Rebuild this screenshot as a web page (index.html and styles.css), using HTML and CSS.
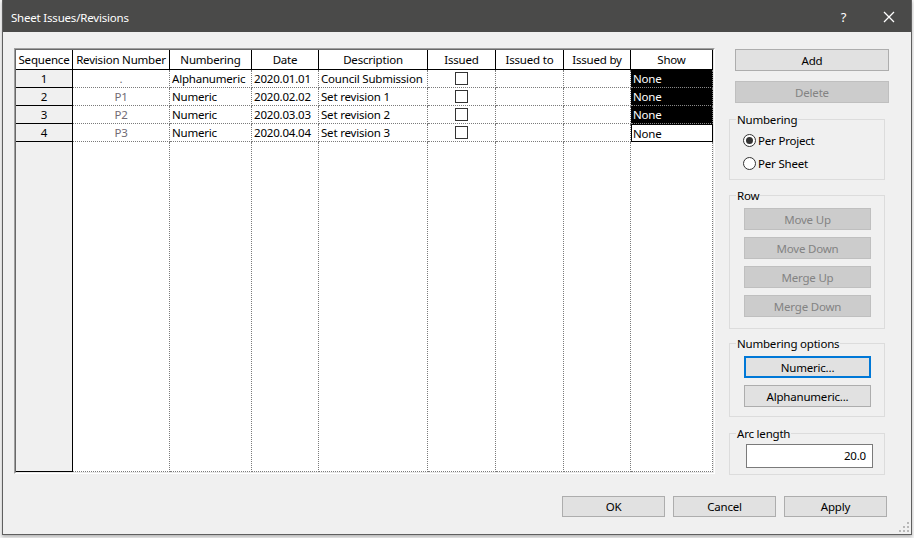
FILE: index.html
```html
<!DOCTYPE html>
<html>
<head>
<meta charset="utf-8">
<title>Sheet Issues/Revisions</title>
<link rel="stylesheet" href="styles.css">
</head>
<body>
<div class="window">
  <div class="titlebar">
    <span class="title">Sheet Issues/Revisions</span>
    <span class="help">?</span>
    <span class="close"><svg width="12" height="12" viewBox="0 0 12 12"><path d="M1 1 L11 11 M11 1 L1 11" stroke="#fff" stroke-width="1.3"/></svg></span>
  </div>
  <div class="client">
    <div class="main">
      <div class="frame">
        <div class="grid">
          <div class="h">Sequence</div>
          <div class="h">Revision Number</div>
          <div class="h">Numbering</div>
          <div class="h">Date</div>
          <div class="h">Description</div>
          <div class="h">Issued</div>
          <div class="h">Issued to</div>
          <div class="h">Issued by</div>
          <div class="h">Show</div>

          <div class="rh">1</div>
          <div class="c rev">.</div>
          <div class="c">Alphanumeric</div>
          <div class="c">2020.01.01</div>
          <div class="c">Council Submission</div>
          <div class="c chk"><span class="box"></span></div>
          <div class="c"></div>
          <div class="c"></div>
          <div class="c show sel">None</div>

          <div class="rh">2</div>
          <div class="c rev">P1</div>
          <div class="c">Numeric</div>
          <div class="c">2020.02.02</div>
          <div class="c">Set revision 1</div>
          <div class="c chk"><span class="box"></span></div>
          <div class="c"></div>
          <div class="c"></div>
          <div class="c show sel">None</div>

          <div class="rh">3</div>
          <div class="c rev">P2</div>
          <div class="c">Numeric</div>
          <div class="c">2020.03.03</div>
          <div class="c">Set revision 2</div>
          <div class="c chk"><span class="box"></span></div>
          <div class="c"></div>
          <div class="c"></div>
          <div class="c show sel">None</div>

          <div class="rh">4</div>
          <div class="c rev">P3</div>
          <div class="c">Numeric</div>
          <div class="c">2020.04.04</div>
          <div class="c">Set revision 3</div>
          <div class="c chk"><span class="box"></span></div>
          <div class="c"></div>
          <div class="c"></div>
          <div class="c show focus">None</div>

          <div class="rh"></div>
          <div class="c"></div>
          <div class="c"></div>
          <div class="c"></div>
          <div class="c"></div>
          <div class="c"></div>
          <div class="c"></div>
          <div class="c"></div>
          <div class="c"></div>
        </div>
      </div>
      <div class="side">
        <button class="btn top">Add</button>
        <button class="btn top off del">Delete</button>
        <fieldset class="group g-num">
          <legend>Numbering</legend>
          <label class="radio first"><span class="circle on"></span>Per Project</label>
          <label class="radio second"><span class="circle"></span>Per Sheet</label>
        </fieldset>
        <fieldset class="group g-row">
          <legend>Row</legend>
          <button class="btn inner off">Move Up</button>
          <button class="btn inner off">Move Down</button>
          <button class="btn inner off">Merge Up</button>
          <button class="btn inner off">Merge Down</button>
        </fieldset>
        <fieldset class="group g-opt">
          <legend>Numbering options</legend>
          <button class="btn inner focus">Numeric...</button>
          <button class="btn inner">Alphanumeric...</button>
        </fieldset>
        <fieldset class="group g-arc">
          <legend>Arc length</legend>
          <div class="input">20.0</div>
        </fieldset>
      </div>
    </div>
    <div class="footer">
      <button class="btn foot">OK</button>
      <button class="btn foot">Cancel</button>
      <button class="btn foot">Apply</button>
    </div>
    <svg class="grip" width="10" height="10" viewBox="0 0 10 10">
      <rect x="8" y="0" width="2" height="2" fill="#b8b8b8"/>
      <rect x="4" y="4" width="2" height="2" fill="#b8b8b8"/>
      <rect x="8" y="4" width="2" height="2" fill="#b8b8b8"/>
      <rect x="0" y="8" width="2" height="2" fill="#b8b8b8"/>
      <rect x="4" y="8" width="2" height="2" fill="#b8b8b8"/>
      <rect x="8" y="8" width="2" height="2" fill="#b8b8b8"/>
    </svg>
  </div>
</div>
</body>
</html>
```

FILE: styles.css
```css
* { box-sizing: border-box; }
html, body { margin: 0; padding: 0; }
body {
  width: 914px;
  height: 538px;
  overflow: hidden;
  background: #f4f4f4;
  font-family: "Noto Sans", "DejaVu Sans", sans-serif;
  font-size: 11.5px;
  letter-spacing: -0.2px;
  color: #000;
}
.window {
  margin-left: 2px;
  width: 910px;
  height: 535px;
  border: 1px solid #5f5f5f;
  border-top: none;
  background: #f0f0f0;
  box-shadow: 0 2px 3px rgba(0, 0, 0, 0.25);
  display: flex;
  flex-direction: column;
}
.titlebar {
  height: 32px;
  padding-top: 2px;
  background: #4a4a49;
  color: #fff;
  display: flex;
  align-items: center;
  flex: none;
}
.title { padding-left: 8px; flex: 1; }
.help { width: 45px; text-align: center; font-size: 13px; }
.close { width: 45px; display: flex; justify-content: center; align-items: center; }
.client {
  flex: 1;
  position: relative;
  padding: 16px 0 0 11px;
}
.main {
  display: flex;
  align-items: flex-start;
  gap: 14px;
}
.frame {
  width: 701px;
  height: 426px;
  border: 1px solid;
  border-color: #a0a0a0 #ffffff #ffffff #a0a0a0;
}
.grid {
  height: 100%;
  border: 1px solid;
  border-color: #696969 #e8e8e8 #e8e8e8 #696969;
  background: #fff;
  display: grid;
  grid-template-columns: 57px 97px 82px 67px 109px 68px 68px 67px 82px;
  grid-template-rows: 20px repeat(4, 18px) 330px;
}
.h {
  background: #fff;
  border-right: 1px solid #000;
  border-bottom: 1px solid #000;
  display: flex;
  align-items: center;
  justify-content: center;
  white-space: nowrap;
}
.rh {
  background: #f0f0f0;
  border-right: 1px solid #000;
  border-bottom: 1px solid #000;
  display: flex;
  align-items: center;
  justify-content: center;
}
.c {
  border-right: 1px dotted #7a7a7a;
  border-bottom: 1px dotted #7a7a7a;
  display: flex;
  align-items: center;
  padding-left: 2px;
  white-space: nowrap;
  overflow: hidden;
}
.rev { justify-content: center; padding-left: 0; color: #716b74; }
.chk { justify-content: center; padding-left: 0; }
.box {
  width: 13px;
  height: 13px;
  border: 1px solid #333;
  background: #fff;
}
.show.sel { background: #000; color: #fff; border-bottom-color: #8a8a8a; }
.show.focus { border: 1px solid #000; padding-left: 1px; }
.side {
  width: 160px;
  margin-top: 1px;
  display: flex;
  flex-direction: column;
  align-items: flex-start;
}
.btn {
  font-family: inherit;
  font-size: 11.5px;
  letter-spacing: -0.2px;
  color: #000;
  background: #e1e1e1;
  border: 1px solid #adadad;
  padding: 0;
  height: 22px;
  display: block;
}
.btn.off { background: #cccccc; border-color: #bfbfbf; color: #838383; }
.btn.top { margin-left: 6px; width: 154px; }
.btn.del { margin-top: 10px; }
.btn.inner { margin-left: 14px; width: 127px; margin-top: 7px; }
.btn.focus { border: 2px solid #0078d7; }
.group {
  margin: 0;
  padding: 0;
  width: 156px;
  min-width: 0;
  border: 1px solid #dcdcdc;
}
.group legend {
  margin-left: 6px;
  padding: 0 1px;
  line-height: 15px;
}
.g-num { margin-top: 9px; padding-bottom: 7px; }
.g-row { margin-top: 8px; padding-bottom: 11px; }
.g-opt { margin-top: 7px; padding-bottom: 9px; }
.g-arc { margin-top: 9px; padding-bottom: 6px; }
.g-row .btn.inner:first-of-type,
.g-opt .btn.inner:first-of-type { margin-top: 5px; }
.radio {
  display: flex;
  align-items: center;
  height: 18px;
  padding-left: 13px;
}
.radio.first { margin-top: 4px; }
.radio.second { margin-top: 5px; }
.circle {
  width: 13px;
  height: 13px;
  border: 1px solid #333;
  border-radius: 50%;
  background: #fff;
  margin-right: 2px;
  display: flex;
  align-items: center;
  justify-content: center;
}
.circle.on::after {
  content: "";
  width: 7px;
  height: 7px;
  border-radius: 50%;
  background: #333;
}
.input {
  margin: 3px 0 0 16px;
  width: 127px;
  height: 24px;
  border: 1px solid #7a7a7a;
  background: #fff;
  text-align: right;
  padding-right: 6px;
  line-height: 22px;
}
.footer {
  margin-top: 21px;
  display: flex;
  justify-content: flex-end;
  gap: 8px;
  padding-right: 24px;
}
.btn.foot { width: 103px; height: 21px; }
.grip {
  position: absolute;
  right: 2px;
  bottom: 2px;
}
```
